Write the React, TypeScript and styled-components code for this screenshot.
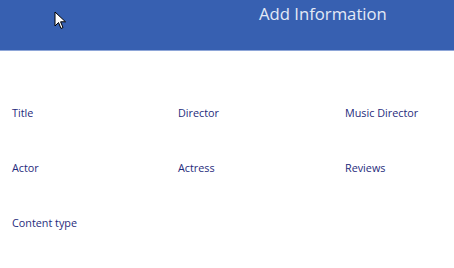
import styled, { createGlobalStyle } from "styled-components"

const GlobalStyle = createGlobalStyle`
    body {
        margin: 0;
        background: #ffffff;
        font-family: "Open Sans", "Noto Sans", sans-serif;
    }
`

const Page = styled.div`
    position: relative;
    width: 454px;
    height: 268px;
    overflow: hidden;
`

const Header = styled.header`
    height: 50px;
    background: #3760b1;
    border-bottom: 1px solid #8ea6d8;
    display: flex;
    align-items: flex-start;
    padding-left: 259px;
    box-sizing: content-box;
`

const HeaderTitle = styled.h1`
    margin: 0;
    padding-top: 2px;
    font-size: 16.7px;
    font-weight: 400;
    line-height: 24px;
    color: #e4eaf6;
`

const FieldGrid = styled.div`
    display: grid;
    grid-template-columns: 166px 167px 1fr;
    row-gap: 39px;
    padding: 54px 0 0 12px;
`

const FieldLabel = styled.span`
    font-size: 10.8px;
    line-height: 16px;
    color: #1f2b7c;
`

const Cursor = styled.svg`
    position: absolute;
    left: 54px;
    top: 11px;
`

const fields = ["Title", "Director", "Music Director", "Actor", "Actress", "Reviews", "Content type"]

export default function App() {
    return (
        <Page>
            <GlobalStyle />
            <Header>
                <HeaderTitle>Add Information</HeaderTitle>
            </Header>
            <FieldGrid>
                {fields.map((f) => (
                    <FieldLabel key={f}>{f}</FieldLabel>
                ))}
            </FieldGrid>
            <Cursor width="13" height="19" viewBox="0 0 13 19">
                <path d="M1 1 L1 15 L4.5 11.5 L7 17.5 L9 16.5 L6.6 10.8 L11.5 10.8 Z" fill="#fff" stroke="#000" strokeWidth="1" strokeLinejoin="miter" />
            </Cursor>
        </Page>
    )
}
